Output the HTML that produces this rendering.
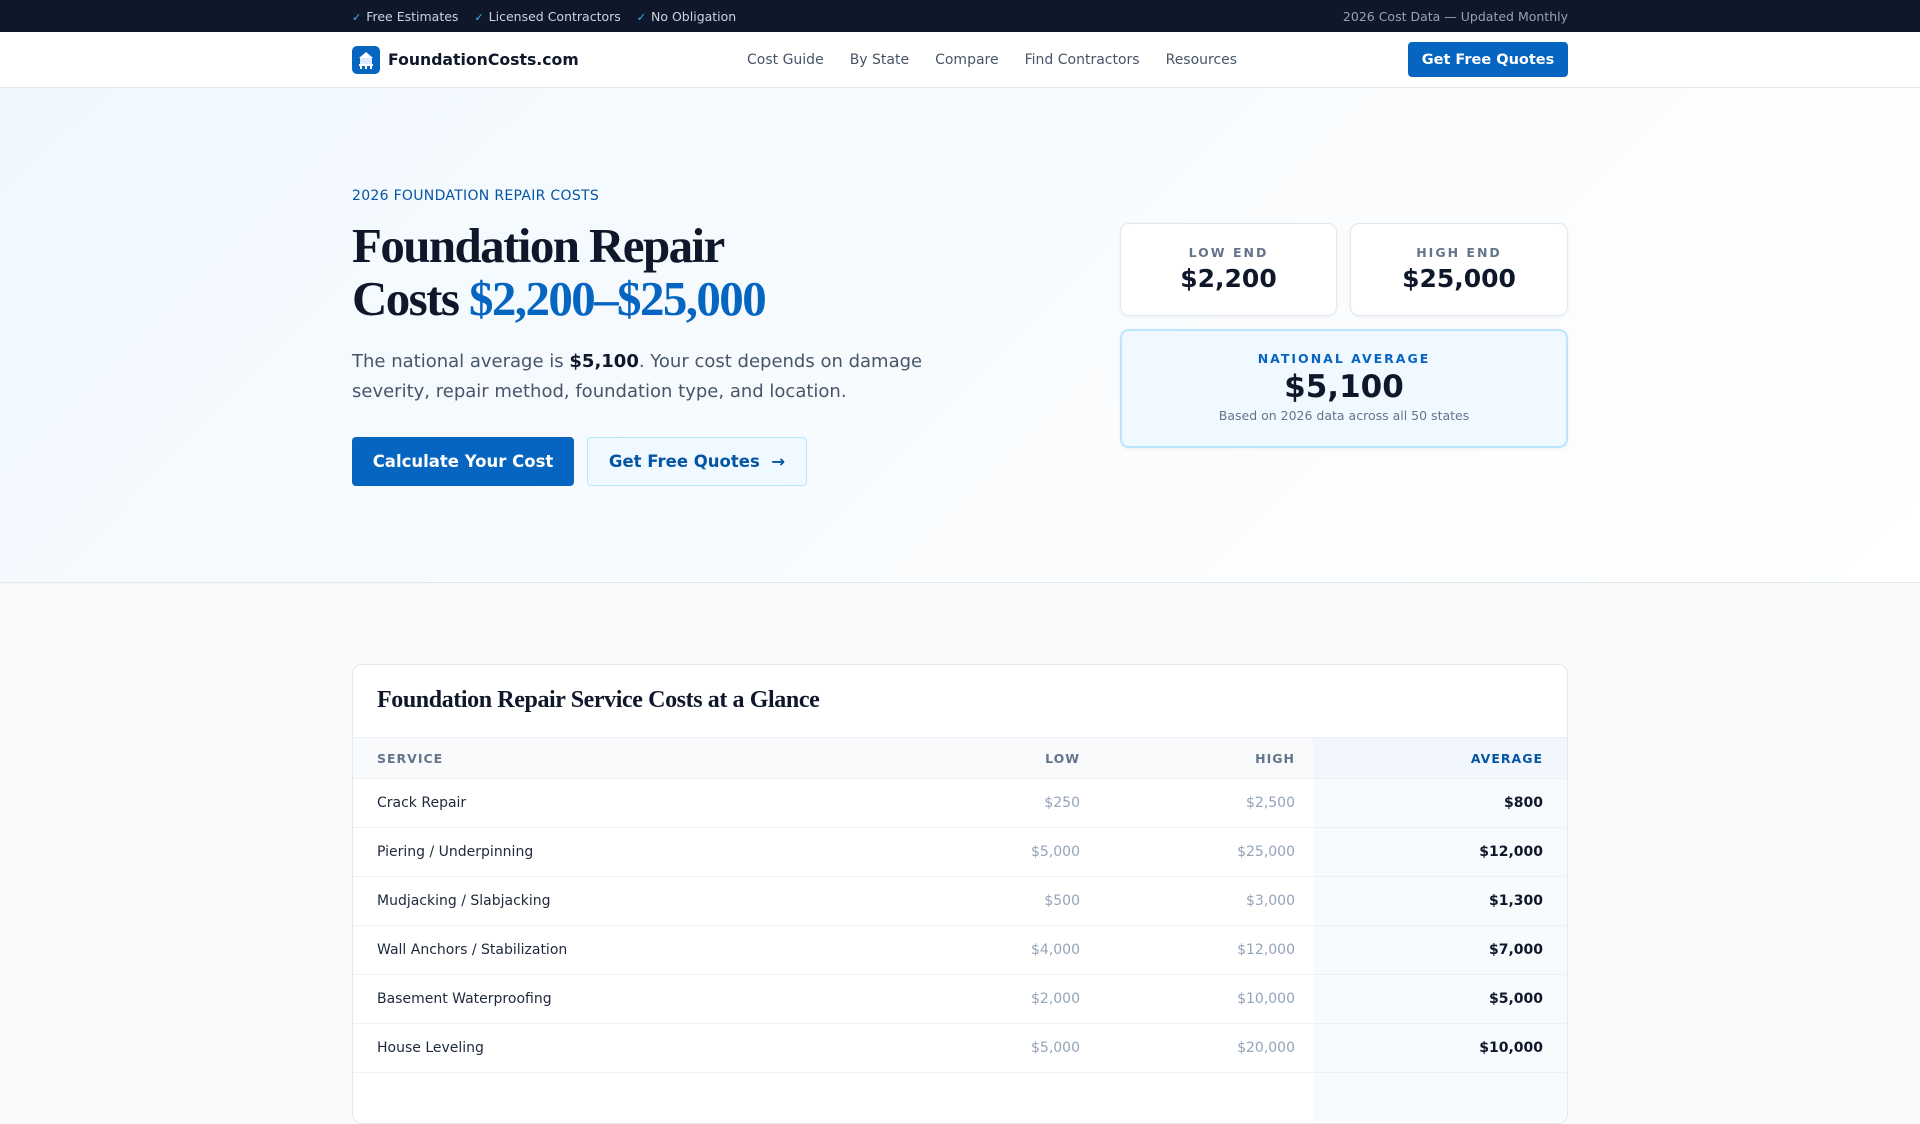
<!DOCTYPE html>
<html><head><meta charset="utf-8"><style>
*{box-sizing:border-box;margin:0;padding:0}
body{width:1920px;height:1080px;overflow:hidden;font-family:"DejaVu Sans","Liberation Sans",sans-serif;background:#f8fafc;color:#0f172a}
.top{height:32px;background:#0f172a;color:#cbd5e1;font-size:12.5px;display:flex;align-items:center;justify-content:space-between;padding:0 352px}
.top .l span{margin-right:16px}.top .l b{color:#38bdf8;font-weight:normal;margin-right:5px;font-size:11px}
.top .r{color:#94a3b8}
.nav{height:56px;background:#fff;border-bottom:1px solid #e2e8f0;display:flex;align-items:center;padding:0 352px;position:relative}
.logo{display:flex;align-items:center;font-weight:bold;font-size:15.7px;color:#0f172a}
.logo .ic{width:28px;height:28px;border-radius:5px;background:#0565c0;margin-right:8px;display:flex;align-items:center;justify-content:center}
.links{position:absolute;left:747px;top:0;height:56px;display:flex;align-items:center;font-size:14px;color:#475569}
.links span{margin-right:26px}
.btn{position:absolute;right:352px;top:10px;height:35px;width:160px;background:#0565c0;color:#fff;border-radius:4px;font-weight:bold;font-size:14.5px;display:flex;align-items:center;justify-content:center}
.hero{height:495px;background:linear-gradient(135deg,#f0f8fe,#fafcfe 60%,#fff);border-bottom:1px solid #e2e8f0;position:relative}
.eyebrow{position:absolute;left:352px;top:188px;font-size:14px;color:#0555a5;letter-spacing:.3px}
h1{position:absolute;left:352px;top:219px;font-family:"Liberation Serif",serif;font-size:49px;line-height:53px;letter-spacing:-1.6px;font-weight:bold;color:#0f172a}
h1 em{font-style:normal;color:#0565c0}
.p{position:absolute;left:352px;top:347px;width:600px;font-size:18px;line-height:29.5px;color:#475569}
.p b{color:#0f172a}
.b1{position:absolute;left:352px;top:437px;width:222px;height:49px;background:#0565c0;color:#fff;border-radius:4px;font-weight:bold;font-size:16.5px;display:flex;align-items:center;justify-content:center}
.b2{position:absolute;left:587px;top:437px;width:220px;height:49px;background:#f0f9ff;border:1px solid #bae6fd;color:#0555a5;border-radius:4px;font-weight:bold;font-size:16.5px;display:flex;align-items:center;justify-content:center}
.hero .eyebrow,.hero h1,.hero .p,.hero .b1,.hero .b2{margin-top:-88px}
.card{position:absolute;background:#fff;border:1px solid #e2e8f0;border-radius:9px;box-shadow:0 1px 3px rgba(0,0,0,.06);text-align:center}
.card .k{font-size:12.5px;font-weight:bold;letter-spacing:2px;color:#64748b;margin-top:21px}
.card .v{font-size:25px;font-weight:bold;color:#0f172a;margin-top:4px}
.avg{background:#f0f9ff;border:2px solid #bae6fd}
.avg .k{color:#0565c0;margin-top:20px}
.avg .v{font-size:31px;margin-top:3px}
.avg .s{font-size:12.5px;color:#64748b;margin-top:3px}
.tbl{position:absolute;left:352px;top:664px;width:1216px;height:460px;background:#fff;border:1px solid #e2e8f0;border-radius:10px;overflow:hidden}
.tbl h2{font-family:"Liberation Serif",serif;font-size:24px;font-weight:bold;letter-spacing:-.4px;padding:22px 0 0 24px;height:72px}
.row{display:flex;height:49px;align-items:center;border-top:1px solid #eef2f6;font-size:14px;position:relative}
.row div{height:100%;display:flex;align-items:center;flex-shrink:0}
.c1{width:350px;padding-left:24px;color:#1e293b}
.c2,.c3{justify-content:flex-end;color:#94a3b8}
.c2{width:377px}.c3{width:215px}
.c4{width:254px;justify-content:flex-end;padding-right:24px;background:#f7fbfe;font-weight:bold;margin-left:18px}
.hd{height:41px;background:#f8fafc;font-size:12.5px;font-weight:bold;letter-spacing:1px;color:#64748b}
.hd .c1{color:#64748b}.hd .c2,.hd .c3{color:#64748b}.hd .c4{color:#0555a5;background:#f1f7fd}
</style></head><body>
<div class="top"><div class="l"><span><b>✓</b>Free Estimates</span><span><b>✓</b>Licensed Contractors</span><span><b>✓</b>No Obligation</span></div><div class="r">2026 Cost Data — Updated Monthly</div></div>
<div class="nav">
<div class="logo"><div class="ic"><svg width="22" height="22" viewBox="0 0 22 22"><path d="M11 3 L4 9 H18 Z" fill="#fff"/><rect x="5" y="9" width="12" height="6" fill="#dbeafe"/><rect x="4" y="15" width="14" height="2" fill="#fff"/><rect x="5" y="17" width="2" height="3" fill="#fff"/><rect x="10" y="17" width="2" height="3" fill="#fff"/><rect x="15" y="17" width="2" height="3" fill="#fff"/></svg></div>FoundationCosts.com</div>
<div class="links"><span>Cost Guide</span><span>By State</span><span>Compare</span><span>Find Contractors</span><span>Resources</span></div>
<div class="btn">Get Free Quotes</div>
</div>
<div class="hero">
<div class="eyebrow">2026 FOUNDATION REPAIR COSTS</div>
<h1>Foundation Repair<br>Costs <em>$2,200–$25,000</em></h1>
<div class="p">The national average is <b>$5,100</b>. Your cost depends on damage severity, repair method, foundation type, and location.</div>
<div class="b1">Calculate Your Cost</div>
<div class="b2">Get Free Quotes &nbsp;→</div>
<div class="card" style="left:1120px;top:135px;width:217px;height:93px"><div class="k">LOW END</div><div class="v">$2,200</div></div>
<div class="card" style="left:1350px;top:135px;width:218px;height:93px"><div class="k">HIGH END</div><div class="v">$25,000</div></div>
<div class="card avg" style="left:1120px;top:241px;width:448px;height:119px"><div class="k">NATIONAL AVERAGE</div><div class="v">$5,100</div><div class="s">Based on 2026 data across all 50 states</div></div>
</div>
<div class="tbl">
<h2>Foundation Repair Service Costs at a Glance</h2>
<div class="row hd"><div class="c1">SERVICE</div><div class="c2">LOW</div><div class="c3">HIGH</div><div class="c4">AVERAGE</div></div>
<div class="row"><div class="c1">Crack Repair</div><div class="c2">$250</div><div class="c3">$2,500</div><div class="c4">$800</div></div>
<div class="row"><div class="c1">Piering / Underpinning</div><div class="c2">$5,000</div><div class="c3">$25,000</div><div class="c4">$12,000</div></div>
<div class="row"><div class="c1">Mudjacking / Slabjacking</div><div class="c2">$500</div><div class="c3">$3,000</div><div class="c4">$1,300</div></div>
<div class="row"><div class="c1">Wall Anchors / Stabilization</div><div class="c2">$4,000</div><div class="c3">$12,000</div><div class="c4">$7,000</div></div>
<div class="row"><div class="c1">Basement Waterproofing</div><div class="c2">$2,000</div><div class="c3">$10,000</div><div class="c4">$5,000</div></div>
<div class="row"><div class="c1">House Leveling</div><div class="c2">$5,000</div><div class="c3">$20,000</div><div class="c4">$10,000</div></div>
<div class="row"><div class="c1"></div><div class="c2"></div><div class="c3"></div><div class="c4"></div></div>
</div>
</body></html>
